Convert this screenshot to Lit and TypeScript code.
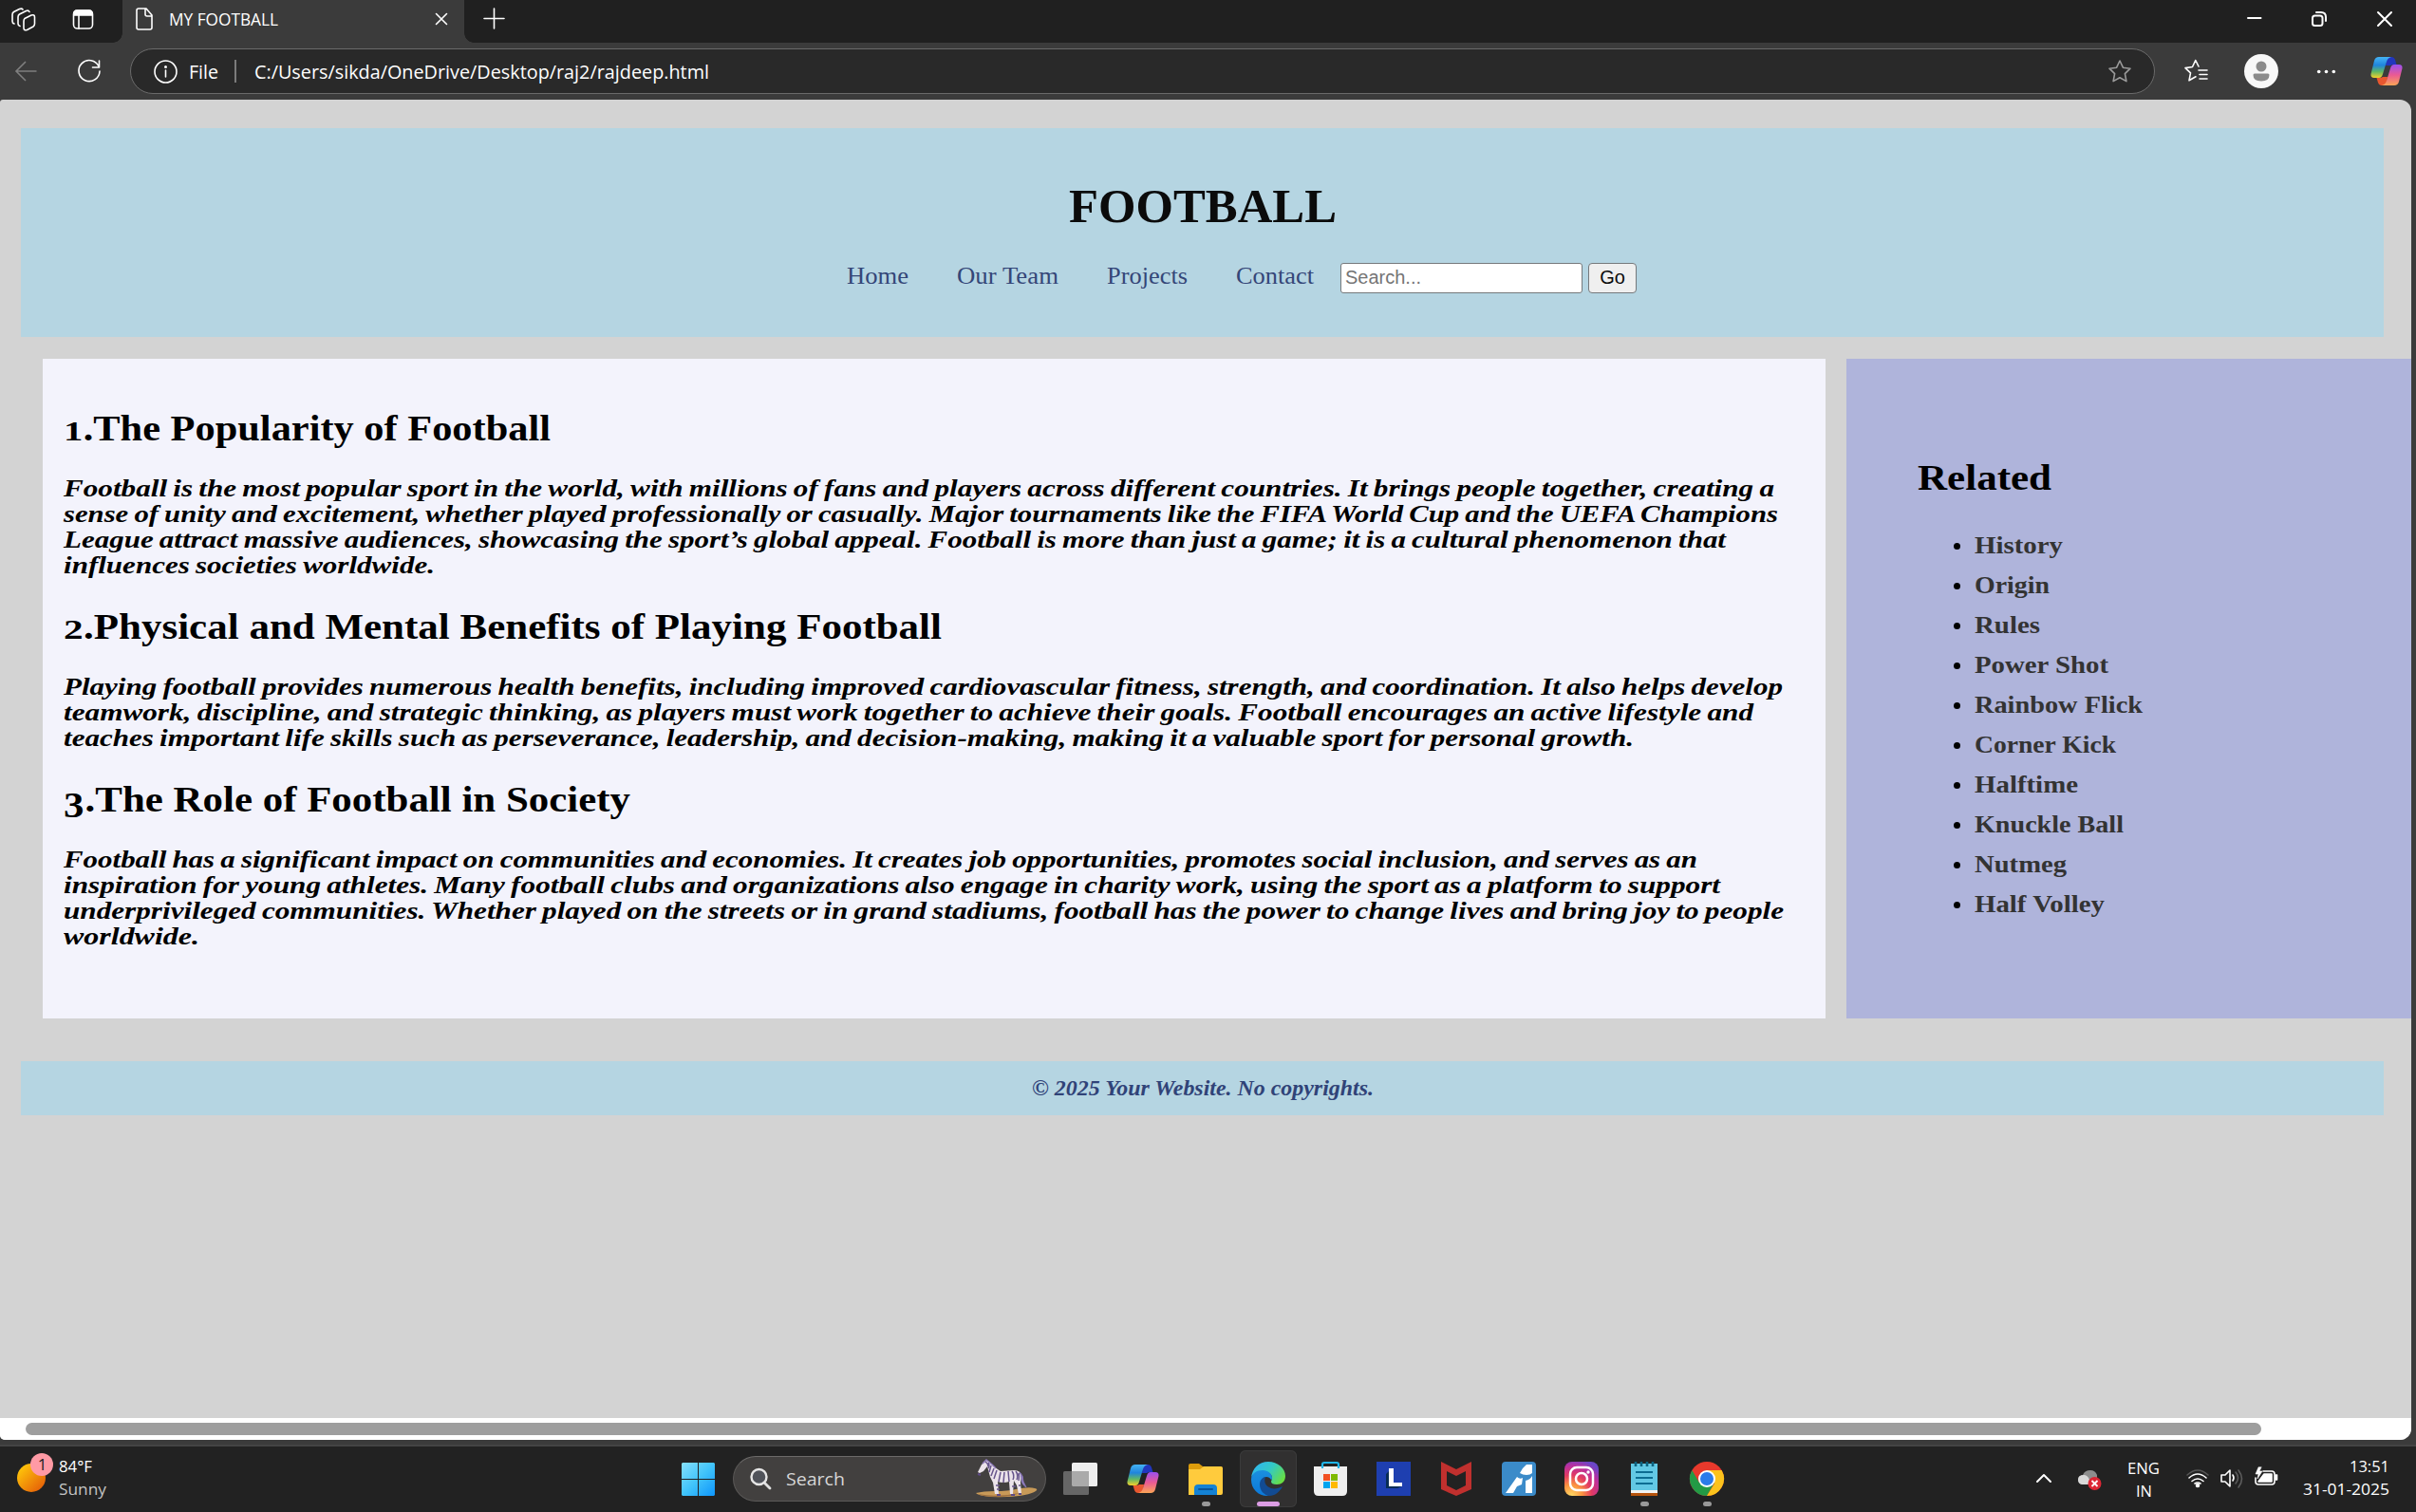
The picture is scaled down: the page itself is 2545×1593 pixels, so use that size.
import { LitElement, html, css, svg } from "lit";
import { customElement, property, state } from "lit/decorators.js";
import { styleMap } from "lit/directives/style-map.js";

/* One line of text, condensed or widened to a given measure. */
@customElement("fit-text")
class FitText extends LitElement {
  @property({ type: Number }) w = 0;
  @state() private k = 1;

  static styles = css`
    :host { display: block; flex: none; white-space: nowrap; }
    .run { display: inline-block; transform-origin: 0 0; }
    .box { display: block; height: 100%; }
  `;

  firstUpdated() {
    const run = this.renderRoot.querySelector(".run") as HTMLElement;
    const natural = run.getBoundingClientRect().width;
    if (natural > 0 && this.w > 0) this.k = this.w / natural;
  }

  render() {
    return html`<span class="box" style=${styleMap({ width: `${this.w}px` })}
      ><span class="run" style=${styleMap({ transform: `scaleX(${this.k})` })}><slot></slot></span
    ></span>`;
  }
}

type Line = [string, number];

const ARTICLES: { title: Line; lines: Line[] }[] = [
  {
    title: ["1.The Popularity of Football", 513],
    lines: [
      ["Football is the most popular sport in the world, with millions of fans and players across different countries. It brings people together, creating a", 1802],
      ["sense of unity and excitement, whether played professionally or casually. Major tournaments like the FIFA World Cup and the UEFA Champions", 1806],
      ["League attract massive audiences, showcasing the sport’s global appeal. Football is more than just a game; it is a cultural phenomenon that", 1751],
      ["influences societies worldwide.", 391],
    ],
  },
  {
    title: ["2.Physical and Mental Benefits of Playing Football", 925],
    lines: [
      ["Playing football provides numerous health benefits, including improved cardiovascular fitness, strength, and coordination. It also helps develop", 1811],
      ["teamwork, discipline, and strategic thinking, as players must work together to achieve their goals. Football encourages an active lifestyle and", 1780],
      ["teaches important life skills such as perseverance, leadership, and decision-making, making it a valuable sport for personal growth.", 1654],
    ],
  },
  {
    title: ["3.The Role of Football in Society", 597],
    lines: [
      ["Football has a significant impact on communities and economies. It creates job opportunities, promotes social inclusion, and serves as an", 1721],
      ["inspiration for young athletes. Many football clubs and organizations also engage in charity work, using the sport as a platform to support", 1745],
      ["underprivileged communities. Whether played on the streets or in grand stadiums, football has the power to change lives and bring joy to people", 1812],
      ["worldwide.", 143],
    ],
  },
];

const NAV: Line[] = [["Home", 65], ["Our Team", 107], ["Projects", 85], ["Contact", 82]];

const RELATED: Line[] = [
  ["History", 93], ["Origin", 79], ["Rules", 69], ["Power Shot", 141], ["Rainbow Flick", 177],
  ["Corner Kick", 149], ["Halftime", 109], ["Knuckle Ball", 157], ["Nutmeg", 97], ["Half Volley", 137],
];

const copilot = (id: string) => svg`
  <defs>
    <linearGradient id=${id + "a"} x1="0" y1="0" x2="0" y2="1">
      <stop offset="0" stop-color="#45b4f5"/><stop offset=".4" stop-color="#1f84dc"/>
      <stop offset=".7" stop-color="#5fb765"/><stop offset="1" stop-color="#f4d02c"/>
    </linearGradient>
    <linearGradient id=${id + "b"} x1="0" y1="0" x2="0" y2="1">
      <stop offset="0" stop-color="#9a50f0"/><stop offset=".5" stop-color="#ea5a93"/>
      <stop offset="1" stop-color="#fba556"/>
    </linearGradient>
  </defs>
  <path d="M17 0h5q3 0 4 3l1.500 5H25q-3 0-4 1h-5z" fill="#2236bd"/>
  <path d="M17 30h-5q-3 0-4-3l-1.500-5H9q3 0 4-1h5z" fill="#e8572f"/>
  <path d="M25 30H12q4-1 5-5l4-13q1-4 4-4h5q4 0 3.500 4L30 26q-1 4-5 4z" fill="url(#${id + "b"})"/>
  <path d="M9 0h13q-4 1-5 5l-4 13q-1 4-4 4H4q-4 0-3.500-4L4 4q1-4 5-4z" fill="url(#${id + "a"})"/>`;

const ICONS: Record<string, unknown> = {
  folder: svg`
    <path d="M0 2q0-2 2-2h9l4 3h18q3 0 3 3v5H0z" fill="#dc9c0c"/>
    <path d="M0 6h12l4-3h18q2 0 2 2v26q0 2-2 2H0z" fill="#ffcb3d"/>
    <path d="M6 33v-7q0-4 4-4h16q4 0 4 4v7z" fill="#1482d4"/>
    <path d="M11 27h14" stroke="#07559b" stroke-width="2" stroke-linecap="round"/>`,
  edge: svg`
    <defs>
      <linearGradient id="ea" x1="0" y1=".2" x2="1" y2=".7"><stop offset="0" stop-color="#2fb5f2"/><stop offset=".5" stop-color="#33c9c5"/><stop offset="1" stop-color="#6ae03f"/></linearGradient>
      <linearGradient id="eb" x1="0" y1="0" x2="0" y2="1"><stop offset="0" stop-color="#1b8fde"/><stop offset="1" stop-color="#0b79da"/></linearGradient>
    </defs>
    <path d="M0 17C1 7 8 0 18 0c10 0 18 7 18 15 0 6-4 9-9 9-4 0-6-1-6-3 0-1 1-2 1-4 0-4-4-7-9-7C7 10 1 13 0 17z" fill="url(#ea)"/>
    <path d="M0 19c0-7 6-10 12-10 6 0 10 4 10 8 0 1 0 2-1 2-1-2-3-3-5-3-3 0-6 3-6 8 0 6 4 10 9 12C8 37 0 29 0 19z" fill="url(#eb)"/>
    <path d="M15 16c-2 5 0 10 6 12 4 1 8 0 12-2-3 6-8 10-14 10-6-1-10-6-10-12 0-4 2-7 6-8z" fill="#124b92"/>`,
  store: svg`
    <path d="M9 7V3q0-2 2-2h13q2 0 2 2v4" fill="none" stroke="#20b5e9" stroke-width="2.2"/>
    <path d="M0 5h35v26q0 5-5 5H5q-5 0-5-5z" fill="#efefef"/>
    <path d="M9 7V4M26 7V4" stroke="#20b5e9" stroke-width="2.2"/>
    <path d="M10 13h7v7h-7z" fill="#f25022"/><path d="M18 13h7v7h-7z" fill="#7fba00"/>
    <path d="M10 21h7v7h-7z" fill="#00a4ef"/><path d="M18 21h7v7h-7z" fill="#ffb900"/>`,
  ell: svg`
    <path d="M0 0h36v36H0z" fill="#1e3fb0"/><path d="M13 10l-3 3v15h12l5-2v-3H15z" fill="#082d55"/>
    <path d="M13 7h5v15h9v4H13z" fill="#fff"/>`,
  shield: svg`<path d="M2 0l16 8 16-8v29l-16 7-16-7zM8 10v15l10 5 10-5V10l-10 5z" fill="#c0302e" fill-rule="evenodd"/>`,
  ai: svg`
    <rect width="36" height="36" rx="4" fill="#3b8bc9"/>
    <path d="M4 33l12-17q3 3 6 1l-1 7-5 2-4 7z" fill="#fff"/>
    <path d="M19 12q3-6 7-9h6v9q-2 2-6 2-4 0-7-2z" fill="#fff"/>
    <path d="M25 20q5-1 7-5v18h-7z" fill="#fff"/>`,
  insta: svg`
    <defs>
      <radialGradient id="ig" cx=".2" cy="1" r="1.1"><stop offset="0" stop-color="#ffdc66"/><stop offset=".3" stop-color="#fb9240"/><stop offset=".55" stop-color="#e23a62"/><stop offset=".8" stop-color="#b92f9f"/><stop offset="1" stop-color="#6b46c8"/></radialGradient>
    </defs>
    <rect width="36" height="36" rx="8" fill="url(#ig)"/>
    <g fill="none" stroke="#fff" stroke-width="2.5"><rect x="6" y="6" width="24" height="24" rx="7"/><circle cx="18" cy="18" r="6"/></g>
    <circle cx="25" cy="11" r="1.7" fill="#fff"/>`,
  notes: svg`
    <path d="M4 31h28v5H4z" fill="#b5530c"/><path d="M4 29h28v4H4z" fill="#f2f2f2"/>
    <path d="M4 2h28v28H4z" fill="#62c8e4"/>
    <path d="M9 11h18M9 17h18M9 23h18" stroke="#0c6d92" stroke-width="2"/>
    <path d="M9 0v5M15 0v5M21 0v5M27 0v5" stroke="#0d6380" stroke-width="2.6"/>`,
  chrome: svg`
    <circle cx="18" cy="18" r="18" fill="#e8392c"/>
    <path d="M2.4 9A18 18 0 0 0 18 36l8-14-8-2-8 2z" fill="#239a45"/>
    <path d="M18 9h15.6A18 18 0 0 1 18 36l8-13z" fill="#fcc31c"/>
    <circle cx="18" cy="18" r="9" fill="#fff"/><circle cx="18" cy="18" r="7" fill="#2a7bea"/>`,
};

@customElement("app-root")
class AppRoot extends LitElement {
  static styles = css`
    :host { display: block; width: 2545px; height: 1593px; overflow: hidden; color: #fff; font-family: "Open Sans", "Noto Sans", sans-serif; }
    * { box-sizing: border-box; }
    svg { display: block; flex: none; overflow: visible; }
    .screen { display: flex; flex-direction: column; height: 1593px; background: #3b3b3b; }
    .line { fill: none; stroke: #fff; stroke-width: 1.6; stroke-linecap: round; stroke-linejoin: round; }
    .bold { stroke-width: 2; }

    .tabs { display: flex; height: 45px; background: #202020; flex: none; }
    .lead { display: flex; width: 129px; padding: 8px 0 0 12px; gap: 38px; }
    .tab { display: flex; width: 360px; padding: 8px 17px 0 13px; background: #3b3b3b; position: relative; }
    .tab::before, .tab::after { content: ""; position: absolute; bottom: 0; width: 10px; height: 10px; }
    .tab::before { left: -10px; background: radial-gradient(circle at 0 0, #202020 9.5px, #3b3b3b 10px); }
    .tab::after { right: -10px; background: radial-gradient(circle at 100% 0, #202020 9.5px, #3b3b3b 10px); }
    .title { margin-left: 16px; font-size: 17.5px; line-height: 24px; }
    .shut { margin: 5px 0 0 auto; }
    .plus { margin: 9px 0 0 21px; }
    .wins { display: flex; margin-left: auto; padding: 12px 25px 0 0; gap: 53px; }

    .tools { display: flex; align-items: center; height: 60px; flex: none; padding-left: 16px; }
    .reload { margin-left: 43px; }
    .address { display: flex; align-items: center; width: 2133px; height: 48px; margin-left: 31px; padding: 0 24px; border: 1.5px solid #6a6a6a; border-radius: 24px; background: #292929; font-size: 19.5px; line-height: 29px; }
    .file { margin-left: 12px; }
    .rule { width: 1.5px; height: 24px; margin: 0 19px 0 17px; background: #7b7b7b; }
    .star { margin-left: auto; }
    .fav { margin-left: 31px; }
    .face { margin-left: 38px; }
    .dots { margin-left: 41px; }
    .pilot { margin-left: 37px; }

    .page { display: flex; flex-direction: column; width: 2540px; height: 1412px; flex: none; border-radius: 3px 12px 12px 5px; overflow: hidden; background: #d3d3d3; color: #000; font-family: "Liberation Serif", serif; }
    .top { width: 2489px; height: 220px; margin: 30px 0 0 22px; padding-top: 55px; background: #b5d5e2; flex: none; }
    h1, h2, p, ul { margin: 0; padding: 0; font-weight: bold; }
    h1 { display: flex; justify-content: center; font-size: 50.4px; line-height: 54px; color: #0b0b0b; padding-left: 1px; }
    .nav { display: flex; justify-content: center; gap: 51px; margin-top: 33px; padding-left: 83px; font-size: 25.2px; line-height: 27px; color: #344678; }
    .find { display: flex; gap: 6px; margin-left: -23px; font: 20px/28px "Liberation Sans", sans-serif; }
    .box { width: 255px; height: 32px; padding: 0 4px; background: #fff; border: 1.5px solid #75797c; border-radius: 3px; color: #757575; }
    .go { width: 51px; height: 32px; text-align: center; background: #efefef; border: 1.5px solid #75797c; border-radius: 4px; color: #0b0b0b; }

    .cols { display: flex; gap: 22px; padding-left: 45px; margin-top: 23px; height: 695px; flex: none; }
    .main { width: 1878px; padding: 53px 22px 0; background: #f3f3fc; }
    .main h2 { height: 41px; font-size: 37.8px; line-height: 41px; }
    .main p { font-size: 25.2px; line-height: 27px; font-style: italic; margin: 29px 0 31px; word-spacing: -0.05em; }
    /* Old-style figures: one and two sit at x-height, three hangs below the baseline. */
    .num { display: inline-block; line-height: 1; font-size: 29px; transform: scaleX(1.25); transform-origin: 0 50%; margin-right: 4px; }
    .hang { font-size: 37.8px; transform: translateY(6px); margin-right: 1px; }
    .side { flex: 1; padding: 105px 0 0 75px; background: #afb4db; }
    .side h2 { font-size: 37.8px; line-height: 41px; }
    .list { display: flex; flex-direction: column; list-style: none; margin-top: 30px; padding-left: 38px; font-size: 25.2px; line-height: 42px; color: #333; }
    .item { display: flex; align-items: center; gap: 15px; height: 42px; }
    .dot { width: 7px; height: 7px; border-radius: 50%; background: #000; }
    .foot { display: flex; justify-content: center; width: 2489px; height: 57px; margin: 45px 0 0 22px; background: #b5d5e2; font-size: 24px; line-height: 57px; font-weight: bold; font-style: italic; color: #304378; flex: none; }
    .scroll { margin-top: auto; height: 23px; padding: 5px 158px 5px 27px; background: #fff; flex: none; }
    .thumb { height: 13px; border-radius: 7px; background: #9e9e9e; }

    .bar { display: flex; height: 71px; margin-top: 5px; border-top: 2px solid #444; background: #222; font-size: 17px; line-height: 24px; flex: none; }
    .weather { display: flex; width: 705px; padding: 7px 0 0 18px; gap: 6px; }
    .temp { padding-top: 2px; }
    .start { width: 67px; padding: 17px 0 0 13px; }
    .search { display: flex; align-items: center; width: 330px; height: 48px; margin-top: 10px; padding: 0 9px 0 17px; border: 1.5px solid #5a5857; border-top-color: #6c6a69; border-radius: 24px; background: #42403f; font-size: 19px; color: #d6d6d6; }
    .word { margin-left: 15px; }
    .zebra { margin-left: auto; }
    .apps { display: flex; gap: 6px; margin: 4px 0 0 6px; }
    .app { display: flex; flex-direction: column; align-items: center; width: 60px; height: 60px; padding-top: 12px; border-radius: 6px; }
    .active { background: #313030; box-shadow: inset 0 0 0 1px #3b3b3b; }
    .mark { width: 9px; height: 5px; margin-top: 6px; border-radius: 3px; background: #999; }
    .active .mark { width: 24px; background: #dc9de4; }
    .tray { display: flex; margin-left: auto; padding-right: 28px; }
    .tray svg { margin-top: 19px; }
    .cloud { margin-left: 28px; }
    .lang { display: flex; flex-direction: column; align-items: center; margin: 11px 28px 0; }
    .sys { display: flex; gap: 12px; }
    .clock { display: flex; flex-direction: column; align-items: flex-end; margin: 9px 0 0 27px; }
    .dim { color: #c4c4c4; }
  `;

  render() {
    return html`<div class="screen">
      <div class="tabs">
        <div class="lead">
          <svg width="26" height="25" class="line"><path d="M14 11.500l7-3.500q3.500-1 3.500 2v7q0 2-1.500 3l-6.500 3.500q-3.500 1-3.500-2v-7q0-2 1-3zM9 19.500q-2-.5-2-2.500v-7q0-2 1.500-3l7-3.500q2.500-1 3.500 1M3 17q-2-.5-2-2.500v-7q0-2 1.500-3l6-3q2.500-1 3.500.5"/></svg>
          <svg width="23" height="25" class="line"><rect x="1.5" y="3" width="20" height="19" rx="4"/><path d="M7 8v14"/><path d="M2 8V6q0-3 3-3h13q3 0 3 3v2z" fill="#fff"/></svg>
        </div>
        <div class="tab">
          <svg width="20" height="25" class="line"><path d="M4 1h8l6 7v13q0 2-2 2H4q-2 0-2-2V3q0-2 2-2zM11 1v6q0 2 2 2h5"/></svg>
          <fit-text class="title" w="115">MY FOOTBALL</fit-text>
          <svg class="shut line" width="14" height="14"><path d="M1.500 1.500l11 11M12.500 1.500l-11 11"/></svg>
        </div>
        <svg class="plus line" width="21" height="21"><path d="M0 10.500h21M10.500 0v21"/></svg>
        <div class="wins">
          <svg width="16" height="16" class="line bold"><path d="M2 7h13.500"/></svg>
          <svg width="16" height="16" class="line bold"><rect x="1" y="4.500" width="10.500" height="10.500" rx="2.500"/><path d="M5 1h5q5 0 5 5v4"/></svg>
          <svg width="16" height="16" class="line bold"><path d="M1 1l14 14M15 1L1 15"/></svg>
        </div>
      </div>

      <div class="tools">
        <svg width="23" height="22"><path d="M22.500 11H1M11 1L1 11l10 10" fill="none" stroke="#7f7f7f" stroke-width="1.600"/></svg>
        <svg class="reload line" width="24" height="24"><path d="M22 7A11 11 0 1 0 23 12M22.500 1v7h-7"/></svg>
        <div class="address">
          <svg width="25" height="25" class="line"><circle cx="12.500" cy="12.500" r="11.500"/><path d="M12.500 11v7"/><circle cx="12.500" cy="7.500" r=".7" fill="#fff"/></svg>
          <fit-text class="file" w="31">File</fit-text>
          <span class="rule"></span>
          <fit-text w="479">C:/Users/sikda/OneDrive/Desktop/raj2/rajdeep.html</fit-text>
          <svg class="star" width="24" height="24"><path d="M12 1l3.400 7.200 7.600 1-5.600 5.400 1.500 8L12 18.700l-6.900 3.900 1.500-8L1 9.200l7.600-1z" fill="none" stroke="#9b9b9b" stroke-width="1.600" stroke-linejoin="round"/></svg>
        </div>
        <svg class="fav line" width="25" height="24"><path d="M15 8l-3.200-6.500L8.500 8.500 1 9.600l5.500 5.200-1.500 8 7-4M15 12h9M16 16.500h8M16 21h8" transform="translate(0 -1)"/></svg>
        <svg class="face" width="36" height="36"><circle cx="18" cy="18" r="18" fill="#f8f8f8"/><circle cx="18" cy="13" r="5.500" fill="#8b8b8b"/><path d="M9.500 22q0-1.500 1.500-1.500h14q1.500 0 1.500 1.500 0 6.500-8.500 6.500T9.500 22z" fill="#8b8b8b"/></svg>
        <svg class="dots" width="19" height="6"><g fill="#fff"><circle cx="1.700" cy="3.500" r="1.800"/><circle cx="9.500" cy="3.500" r="1.800"/><circle cx="17.300" cy="3.500" r="1.800"/></g></svg>
        <svg class="pilot" width="34" height="30">${copilot("p")}</svg>
      </div>

      <div class="page">
        <div class="top">
          <h1><fit-text w="282">FOOTBALL</fit-text></h1>
          <div class="nav">
            ${NAV.map(([t, w]) => html`<fit-text w=${w}>${t}</fit-text>`)}
            <div class="find"><div class="box"><fit-text w="80">Search...</fit-text></div><div class="go">Go</div></div>
          </div>
        </div>
        <div class="cols">
          <div class="main">
            ${ARTICLES.map(
              (a) => html`<h2><fit-text w=${a.title[1]}><span class="num ${a.title[0][0] === "3" ? "hang" : ""}">${a.title[0][0]}</span>${a.title[0].slice(1)}</fit-text></h2>
                <p>${a.lines.map(([t, w]) => html`<fit-text w=${w}>${t}</fit-text>`)}</p>`
            )}
          </div>
          <div class="side">
            <h2><fit-text w="141">Related</fit-text></h2>
            <ul class="list">
              ${RELATED.map(([t, w]) => html`<li class="item"><span class="dot"></span><fit-text w=${w}>${t}</fit-text></li>`)}
            </ul>
          </div>
        </div>
        <div class="foot"><fit-text w="360">© 2025 Your Website. No copyrights.</fit-text></div>
        <div class="scroll"><div class="thumb"></div></div>
      </div>

      <div class="bar">
        <div class="weather">
          <svg width="38" height="42">
            <defs><linearGradient id="sun" x1="0" y1="0" x2="1" y2="1"><stop offset=".1" stop-color="#ffc80a"/><stop offset=".9" stop-color="#e55f08"/></linearGradient></defs>
            <circle cx="15" cy="26" r="15" fill="url(#sun)"/><circle cx="26" cy="12" r="12" fill="#ff9aa5"/>
            <text x="26.500" y="18" font-size="17" text-anchor="middle" fill="#222">1</text>
          </svg>
          <div class="temp"><fit-text w="35">84°F</fit-text><fit-text class="dim" w="50">Sunny</fit-text></div>
        </div>
        <div class="start">
          <svg width="35" height="35">
            <defs><linearGradient id="win" gradientUnits="userSpaceOnUse" x1="0" y1="0" x2="35" y2="35"><stop offset="0" stop-color="#86e0fc"/><stop offset=".5" stop-color="#41c4fa"/><stop offset="1" stop-color="#0e95fb"/></linearGradient></defs>
            <path d="M1 0h16v17H0V1zM18 0h16l1 1v16H18zM0 18h17v17H1l-1-1zM18 18h17v16l-1 1H18z" fill="url(#win)"/>
          </svg>
        </div>
        <div class="search">
          <svg width="23" height="24"><path d="M15.500 16.500l5.500 5.500" stroke="#dfdfdf" stroke-width="2.800" stroke-linecap="round"/><circle cx="9.500" cy="10" r="8" fill="#50535a" stroke="#e6e6e6" stroke-width="2.400"/></svg>
          <fit-text class="word" w="62">Search</fit-text>
          <svg class="zebra" width="64" height="40">
            <path d="M0 35q8-2 20-2 14 0 22-2 14-3 20-1 4 1 1 3-8 5-30 6-28 1-33-4z" fill="#c89a58"/>
            <path d="M2 36q20 4 44-1-8 4-24 4-15 0-20-3z" fill="#9d6f3f"/>
            <path d="M2 13L6 5l5-4 3 1 6 6 6 4 14-1q8 0 8 7l-1 6 1 12h-3l-2-9-3-5-1 14h-3l-1-13q-6 2-12 0l1 13h-4l-2-12-3-6-3-11-4 5-4 2z" fill="#ebe3ea"/>
            <path d="M10 2q3 2 3 5M13 3q2 3 0 6M16 6l-2 7M19 9l-3 8M22 11l-3 9M26 13l-2 10M30 13l-1 11M34 12l1 11M38 12q3 4 1 9M42 12q3 4 1 9M45 14q1 3 0 8M21 27h4M22 31h3M38 28h4M45 27h2" fill="none" stroke="#67568c" stroke-width="1.500"/>
            <path d="M7 4l4-4 6 5 4 4" fill="none" stroke="#8f7cba" stroke-width="1.500"/>
            <path d="M46 13q4 3 4 10l3 6q-5-3-5-9 0-4-2-7z" fill="#9a86c6" stroke="#8674b4"/>
            <path d="M22 37h4M37 37h4M45 36h3M2 15l3 1" stroke="#5e4a86" stroke-width="2"/>
          </svg>
        </div>
        <div class="apps">
          <div class="app"><svg width="36" height="36">
            <rect x="9" y="1" width="27" height="25" rx="1.500" fill="#eee"/><rect y="10" width="27" height="25" rx="1.500" fill="#666"/><path d="M9 10h18v16H10l-1-1z" fill="#aaa"/></svg></div>
          <div class="app"><svg width="34" height="36"><g transform="translate(0 3)">${copilot("t")}</g></svg></div>
          ${[["folder", 1], ["edge", 2], ["store", 0], ["ell", 0], ["shield", 0], ["ai", 0], ["insta", 0], ["notes", 1], ["chrome", 1]].map(
            ([n, m]) => html`<div class="app ${m === 2 ? "active" : ""}">
              <svg width="36" height="36" viewBox=${n === "folder" ? "0 -2 36 36" : "0 0 36 36"}>${ICONS[n as string]}</svg>
              ${m ? html`<span class="mark"></span>` : ""}
            </div>`
          )}
        </div>
        <div class="tray">
          <svg width="16" height="28" class="line bold"><path d="M1 18l7-7 7 7"/></svg>
          <svg class="cloud" width="24" height="28"><path d="M5 21q-5 0-5-5 0-4 5-5 2-5 8-5 5 0 7 5v10z" fill="#8d8d8d"/><path d="M4 21q-4-1-4-5 0-5 6-5 4 0 6 5v5z" fill="#d8d8d8"/><circle cx="17.500" cy="20" r="7" fill="#dc2634"/><path d="M14.500 17l6 6M20.500 17l-6 6" stroke="#fff" stroke-width="1.800"/></svg>
          <div class="lang"><fit-text w="34">ENG</fit-text><fit-text w="17">IN</fit-text></div>
          <div class="sys">
            <svg width="24" height="28" class="line"><path d="M1 11q11-10 22 0" stroke="#555"/><path d="M3 14q9-8 18 0M6 17.500q6-5 12 0M9 20q3-2 6 0" /><circle cx="12" cy="22" r="1.500" fill="#fff"/></svg>
            <svg width="24" height="28" class="line"><path d="M1 11h4l5-5v17l-5-5H1zM13 11q2 3 0 6"/><path d="M16 8q5 6 0 12M19 6q7 9 0 18" stroke="#5b5b5b"/></svg>
            <svg width="24" height="28" class="line"><path d="M9 7h9q3 0 3 3v8q0 3-3 3H4q-3 0-3-3v-4"/><path d="M22 11v5h1.500v-5z" fill="#fff"/><path d="M10 10h8v8H4z" fill="#fff"/><path d="M4 3L1 10h3l-1 5 5-8H5l2-4z" fill="#fff" stroke-width=".6"/></svg>
          </div>
          <div class="clock"><fit-text w="42">13:51</fit-text><fit-text w="91">31-01-2025</fit-text></div>
        </div>
      </div>
    </div>`;
  }
}
